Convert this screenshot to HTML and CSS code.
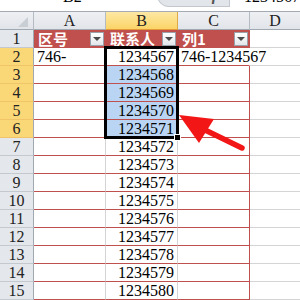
FILE: index.html
```html
<!DOCTYPE html>
<html>

<head>
    <meta charset="UTF-8">
    <title>联系人表格</title>
    <link rel="stylesheet" href="styles.css">
</head>

<body>
    <div class="sheet">
        <div class="formula-bar">
            <div class="fb-inner">
                <div class="name-box">B2</div>
                <div class="fx-box"><span class="fx">fx</span></div>
                <div class="formula">1234567</div>
            </div>
        </div>
        <div class="grid">
            <div class="corner">
                <svg viewBox="0 0 10 10" width="10" height="10">
                    <polygon points="10,0 10,10 0,10" fill="#c9ced5" />
                </svg>
            </div>
            <div class="col-head">A</div>
            <div class="col-head active">B</div>
            <div class="col-head">C</div>
            <div class="col-head last">D</div>

            <div class="row-head">1</div>
            <div class="th">区号<span class="filter"></span></div>
            <div class="th">联系人<span class="filter"></span></div>
            <div class="th">列1<span class="filter"></span></div>
            <div class="cell d"></div>

            <div class="row-head active">2</div>
            <div class="cell a">746-</div>
            <div class="cell b current">1234567<div class="selection"></div></div>
            <div class="cell c overflow">746-1234567</div>
            <div class="cell d"></div>

            <div class="row-head active">3</div>
            <div class="cell a"></div>
            <div class="cell b sel">1234568</div>
            <div class="cell c"></div>
            <div class="cell d"></div>

            <div class="row-head active">4</div>
            <div class="cell a"></div>
            <div class="cell b sel">1234569</div>
            <div class="cell c"></div>
            <div class="cell d"></div>

            <div class="row-head active">5</div>
            <div class="cell a"></div>
            <div class="cell b sel">1234570</div>
            <div class="cell c"></div>
            <div class="cell d"></div>

            <div class="row-head active">6</div>
            <div class="cell a"></div>
            <div class="cell b sel">1234571</div>
            <div class="cell c"></div>
            <div class="cell d"></div>

            <div class="row-head">7</div>
            <div class="cell a"></div>
            <div class="cell b">1234572</div>
            <div class="cell c"></div>
            <div class="cell d"></div>

            <div class="row-head">8</div>
            <div class="cell a"></div>
            <div class="cell b">1234573</div>
            <div class="cell c"></div>
            <div class="cell d"></div>

            <div class="row-head">9</div>
            <div class="cell a"></div>
            <div class="cell b">1234574</div>
            <div class="cell c"></div>
            <div class="cell d"></div>

            <div class="row-head">10</div>
            <div class="cell a"></div>
            <div class="cell b">1234575</div>
            <div class="cell c"></div>
            <div class="cell d"></div>

            <div class="row-head">11</div>
            <div class="cell a"></div>
            <div class="cell b">1234576</div>
            <div class="cell c"></div>
            <div class="cell d"></div>

            <div class="row-head">12</div>
            <div class="cell a"></div>
            <div class="cell b">1234577</div>
            <div class="cell c"></div>
            <div class="cell d"></div>

            <div class="row-head">13</div>
            <div class="cell a"></div>
            <div class="cell b">1234578</div>
            <div class="cell c"></div>
            <div class="cell d"></div>

            <div class="row-head">14</div>
            <div class="cell a"></div>
            <div class="cell b">1234579</div>
            <div class="cell c"></div>
            <div class="cell d"></div>

            <div class="row-head">15</div>
            <div class="cell a"></div>
            <div class="cell b">1234580</div>
            <div class="cell c"></div>
            <div class="cell d"></div>
        </div>
        <svg class="arrow" viewBox="0 0 300 300" width="300" height="300">
            <line x1="242" y1="148" x2="203" y2="129" stroke="#f21616" stroke-width="5.5" stroke-linecap="round" />
            <polygon points="179,115 214,119 199,143" fill="#f21616" />
        </svg>
    </div>
</body>

</html>
```

FILE: styles.css
```css
body {
    margin: 0;
    background: #fff;
    font-family: "Liberation Serif", serif;
}

.sheet {
    position: relative;
    width: 300px;
    height: 300px;
    overflow: hidden;
}

.formula-bar {
    height: 11px;
    border-bottom: 1px solid #a4abb5;
    overflow: hidden;
}

.fb-inner {
    display: flex;
    align-items: center;
    height: 26px;
    margin-top: -16px;
    font-size: 16px;
}

.name-box {
    width: 160px;
    padding-left: 63px;
    box-sizing: border-box;
}

.fx-box {
    align-self: flex-start;
    width: 76px;
    height: 23px;
    background: #e2e5ea;
    border: 1px solid #c3c8cf;
    border-top: none;
    border-radius: 0 0 0 12px;
    display: flex;
    align-items: center;
    justify-content: flex-end;
    padding-right: 4px;
    box-sizing: border-box;
}

.fx {
    font-style: italic;
    font-weight: bold;
    color: #555;
}

.formula {
    flex: 1;
    padding-left: 14px;
}

.grid {
    display: grid;
    grid-template-columns: 34px 72px 72px 72px 1fr;
    grid-auto-rows: 18px;
    font-size: 16px;
    line-height: 17px;
}

.corner,
.col-head,
.row-head {
    box-sizing: border-box;
    background: linear-gradient(#eef0f3, #e1e4e9);
    border-right: 1px solid #b6bcc4;
    border-bottom: 1px solid #a0a8b2;
    color: #222;
}

.corner {
    display: flex;
    align-items: flex-end;
    justify-content: flex-end;
    padding: 0 5px 2px 0;
}

.col-head {
    text-align: center;
}

.col-head.active {
    background: linear-gradient(#fde8a4, #fbd467);
    border-right-color: #dfa94a;
    border-bottom-color: #e39a36;
}

.col-head.last {
    border-right: none;
}

.row-head {
    text-align: center;
    background: #e4e7ec;
    border-bottom-color: #c4c9d0;
    border-right-color: #a0a8b2;
}

.row-head.active {
    background: #fad878;
    border-bottom-color: #f0c468;
}

.th {
    display: flex;
    align-items: center;
    justify-content: space-between;
    padding: 0 2px 0 4px;
    background: #c0504d;
    color: #fff;
    font-family: "Noto Sans CJK SC", sans-serif;
    font-weight: bold;
    font-size: 15px;
    line-height: 18px;
}

.filter {
    width: 14px;
    height: 14px;
    box-sizing: border-box;
    border: 1px solid #9aa1aa;
    background: linear-gradient(#ffffff, #e3e6ea);
    display: flex;
    align-items: center;
    justify-content: center;
}

.filter::after {
    content: "";
    border-left: 4px solid transparent;
    border-right: 4px solid transparent;
    border-top: 4px solid #4a4a4a;
}

.cell {
    box-sizing: border-box;
    padding: 0 3px;
    white-space: nowrap;
    color: #000;
    border-bottom: 1px solid #c0504d;
    border-right: 1px solid #d4d4d4;
}

.cell.b {
    text-align: right;
}

.cell.current {
    position: relative;
    z-index: 2;
}

.cell.c {
    border-right-color: #c0504d;
}

.cell.overflow {
    border-right-color: transparent;
    position: relative;
    z-index: 1;
}

.cell.d {
    border-bottom-color: #d4d4d4;
    border-right: none;
}

.cell.sel {
    background: #b9d5f3;
}

/* heavy outline round B2:B6, drawn over the cells below */
.selection {
    position: absolute;
    left: -2px;
    top: -2px;
    width: 75px;
    height: 93px;
    box-sizing: border-box;
    border: 3px solid #000;
}

.selection::after {
    content: "";
    position: absolute;
    right: -5px;
    bottom: -5px;
    width: 5px;
    height: 5px;
    background: #000;
    border: 1px solid #fff;
}

.arrow {
    position: absolute;
    left: 0;
    top: 0;
    pointer-events: none;
    z-index: 3;
}
```
